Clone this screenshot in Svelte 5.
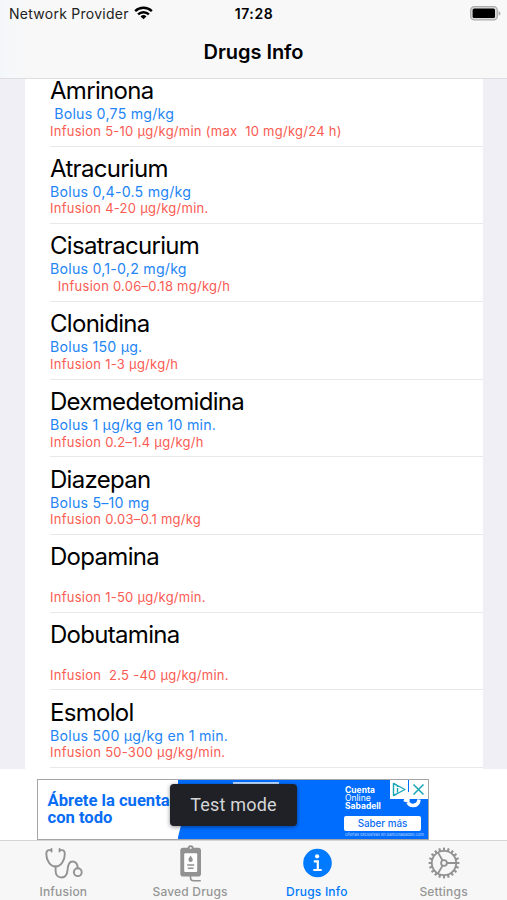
<script>
  const drugs = [
    { name: 'Amrinona', bolus: ' Bolus 0,75 mg/kg', infusion: 'Infusion 5-10 µg/kg/min (max  10 mg/kg/24 h)' },
    { name: 'Atracurium', bolus: 'Bolus 0,4-0.5 mg/kg', infusion: 'Infusion 4-20 µg/kg/min.' },
    { name: 'Cisatracurium', bolus: 'Bolus 0,1-0,2 mg/kg', infusion: '  Infusion 0.06–0.18 mg/kg/h' },
    { name: 'Clonidina', bolus: 'Bolus 150 µg.', infusion: 'Infusion 1-3 µg/kg/h' },
    { name: 'Dexmedetomidina', bolus: 'Bolus 1 µg/kg en 10 min.', infusion: 'Infusion 0.2–1.4 µg/kg/h' },
    { name: 'Diazepan', bolus: 'Bolus 5–10 mg', infusion: 'Infusion 0.03–0.1 mg/kg' },
    { name: 'Dopamina', bolus: '', infusion: 'Infusion 1-50 µg/kg/min.' },
    { name: 'Dobutamina', bolus: '', infusion: 'Infusion  2.5 -40 µg/kg/min.' },
    { name: 'Esmolol', bolus: 'Bolus 500 µg/kg en 1 min.', infusion: 'Infusion 50-300 µg/kg/min.' }
  ];
  const teeth = Array.from({ length: 20 }, (_, i) => i * 18);
</script>

<div class="phone">
  <header>
    <div class="status">
      <div class="carrier">
        <span>Network Provider</span>
        <svg width="19" height="14" viewBox="0 0 20 14" fill="none" stroke="#000" stroke-width="2.5">
          <path d="M1.2 5.1a12.6 12.6 0 0 1 17.6 0" />
          <path d="M4.3 8.5a8.1 8.1 0 0 1 11.4 0" />
          <path d="M10 13.6 6.9 10.6a4.5 4.5 0 0 1 6.2 0z" fill="#000" stroke="none" />
        </svg>
      </div>
      <span class="time">17:28</span>
      <svg class="battery" width="31" height="15" viewBox="0 0 31 15">
        <rect x=".7" y=".7" width="26.6" height="13.2" rx="3.6" fill="#ddd" stroke="#adadad" stroke-width="1.3" />
        <rect x="2.6" y="2.6" width="22.4" height="9.4" rx="1.5" />
        <path d="M28.6 5v4.8q1.9-.9 1.9-2.4T28.6 5z" fill="#aaa" />
      </svg>
    </div>
    <h1>Drugs Info</h1>
  </header>

  <main>
    <ul>
      {#each drugs as d}
        <li>
          <div class="name">{d.name}</div>
          <div class="bolus">{d.bolus}</div>
          <div class="infusion">{d.infusion}</div>
        </li>
      {/each}
    </ul>
  </main>

  <section class="ad-area">
    <div class="ad">
      <svg class="shape" width="250" height="59" viewBox="0 0 250 59">
        <path d="M-1 0h251v59H-.5L7 30z" fill="#006dff" />
        <path d="M55 3h46" stroke="#fff" stroke-width="1.5" />
        <path d="M226 19.5q3 1 5.500 1.500M230 22.500q1.500 3 5 3 5.500 0 6-6" fill="none" stroke="#fff" stroke-width="3.500" />
      </svg>
      <div class="claim">Ábrete la cuenta<br />con todo</div>
      <div class="offer">
        <div class="brand"><b>Cuenta</b><span>Online</span><b>Sabadell</b></div>
        <div class="more">Saber más</div>
        <div class="legal">Ofertas exclusivas en bancosabadell.com</div>
      </div>
      <svg class="choices" width="38" height="19" viewBox="0 0 38 19">
        <path d="M0 0h38v19H0z" fill="#fff" />
        <path d="M3.500 3.500v12l3-1.500 8.500-4.500-8.500-4.500z M7.500 8v4.500M7.500 5.900v1" fill="none" stroke="#16a6b8" stroke-width="1.400" stroke-linejoin="round" />
        <path d="M18.500 0v12" stroke="#006dff" stroke-width="1" />
        <path d="m23.500 4.500 10 10m0-10-10 10" stroke="#16a6b8" stroke-width="1.500" />
      </svg>
      <div class="toast">Test mode</div>
    </div>
  </section>

  <nav>
    <div class="tab">
      <svg width="40" height="36" viewBox="-1 0 40 36" fill="none" stroke="#929292" stroke-width="1.900" stroke-linecap="round" stroke-linejoin="round">
        <path d="M7.300 2.100H5.200Q2.300 2.100 2.300 6C2.300 12 6 18.500 11.600 18.500S20.800 12 20.800 6q0-3.900-2.900-3.900h-2.100M7.500 1v2.500M15.600 1v2.500" />
        <path d="M11.600 18.500V23c0 3.800 2.200 6.500 6 6.500 4.300 0 5.600-3 6-7.800.4-5 1.200-8.200 4.800-8.200 3.800 0 5.200 2.700 5.300 6.700" />
        <circle cx="33.800" cy="24.200" r="3.900" />
      </svg>
      <span>Infusion</span>
    </div>
    <div class="tab">
      <svg width="40" height="36" viewBox="0 0 40 36" fill="#929292">
        <rect x="10.300" y="-.2" width="20.700" height="28.700" rx="2.800" />
        <path d="M17.500 1q0-3.800 3.200-3.800t3.200 3.800" />
        <rect x="14.200" y="5.200" width="13" height="18.800" rx="1" fill="#fff" />
        <path d="M20.600 7.500c-1 1.800-2.200 2.900-2.200 4.300a2.200 2.200 0 0 0 4.400 0c0-1.400-1.200-2.500-2.200-4.300z" />
        <path d="M17.200 17h7M17.800 20.200h5.800M20.500 28v1.700q0 3 3 3h7.300" fill="none" stroke="#929292" stroke-width="1.600" />
        <circle cx="20.700" cy="0" r="1" fill="#f6f6f6" />
      </svg>
      <span>Saved Drugs</span>
    </div>
    <div class="tab active">
      <svg width="40" height="36" viewBox="0 0 40 36">
        <circle cx="20.500" cy="15" r="14.300" fill="#007aff" />
        <circle cx="20.100" cy="8.300" r="2.100" fill="#fff" />
        <path d="M16.800 13.300h4v8.500M16.300 22h8.400" fill="none" stroke="#fff" stroke-width="2.200" />
      </svg>
      <span>Drugs Info</span>
    </div>
    <div class="tab">
      <svg width="40" height="36" viewBox="0 0 40 36" fill="none" stroke="#929292" stroke-width="1.800">
        <circle cx="20" cy="15" r="12.200" />
        <circle cx="20" cy="15" r="2.900" />
        <path d="M22.900 15h9.300M18.600 12.500 13.900 4.400M18.600 17.500l-4.700 8.100" />
        {#each teeth as a}
          <path d="M20 2.800V-.4" stroke-width="2.100" transform={`rotate(${a} 20 15)`} />
        {/each}
      </svg>
      <span>Settings</span>
    </div>
  </nav>
</div>

<style>
  .phone {
    width: 507px;
    height: 900px;
    overflow: hidden;
    display: flex;
    flex-direction: column;
    background: #fff;
    color: #000;
    font-family: Inter, 'Liberation Sans', sans-serif;
  }
  header {
    flex: none;
    box-sizing: border-box;
    height: 79px;
    border-bottom: 1px solid #dedee0;
    background: linear-gradient(90deg, #f4f7f9, #f8f8f8 30px);
    z-index: 1;
  }
  .status {
    display: grid;
    grid-template-columns: 1fr auto 1fr;
    align-items: center;
    height: 27px;
    padding: 0 6px 0 9px;
  }
  .carrier {
    display: flex;
    align-items: center;
    gap: 5px;
    font-size: 14px;
    line-height: 27px;
    letter-spacing: 0.26px;
    white-space: nowrap;
    color: #222;
  }
  .carrier svg { margin-top: -2px; }
  .time {
    font-size: 14px;
    font-weight: 600;
    letter-spacing: 0.6px;
    margin-left: -2px;
  }
  .battery { justify-self: end; }
  h1 {
    margin: 0;
    height: 51px;
    line-height: 51px;
    text-align: center;
    font-size: 20px;
    font-weight: 600;
    letter-spacing: -0.05px;
  }
  main {
    flex: none;
    height: 690px;
    overflow: hidden;
    padding: 0 24px 0 25px;
    background: #f0eff5;
  }
  ul {
    list-style: none;
    margin: -10.2px 0 0;
    padding: 0 0 4px 25px;
    background: #fff;
  }
  li {
    box-sizing: border-box;
    height: 77.7px;
    padding-top: 6.3px;
    border-bottom: 1.4px solid #e8e8ea;
  }
  .name {
    height: 31px;
    line-height: 31px;
    font-size: 24px;
    letter-spacing: -0.7px;
  }
  .bolus {
    height: 16.7px;
    line-height: 16px;
    font-size: 14.2px;
    letter-spacing: 0.22px;
    color: #2385f5;
    white-space: pre;
  }
  .infusion {
    height: 16px;
    line-height: 16px;
    font-size: 13px;
    letter-spacing: 0.26px;
    color: #fa5b52;
    white-space: pre;
  }
  .ad-area {
    flex: none;
    height: 71px;
    box-sizing: border-box;
    padding: 10px 0 0 37px;
  }
  .ad {
    position: relative;
    box-sizing: border-box;
    width: 392px;
    height: 61px;
    border: 1px solid #a5a5a8;
    display: flex;
    justify-content: space-between;
    overflow: hidden;
  }
  .shape { position: absolute; right: 0; top: 0; }
  .claim {
    padding: 12px 0 0 9.5px;
    font: 700 16.6px/17px Roboto, sans-serif;
    color: #086cf5;
    white-space: nowrap;
  }
  .offer {
    position: relative;
    width: 83px;
    color: #fff;
    white-space: nowrap;
  }
  .brand {
    display: flex;
    flex-direction: column;
    padding-top: 6px;
    font: 8.5px/8px Inter, sans-serif;
  }
  .more {
    width: 77px;
    height: 15px;
    margin: 6px 0 0 -1px;
    border-radius: 2px;
    background: #fff;
    color: #086cf5;
    text-align: center;
    font: 500 9.8px/15px Inter, sans-serif;
  }
  .legal {
    font: 4px/6px Inter, sans-serif;
    margin-top: 1px;
    opacity: 0.7;
  }
  .choices { position: absolute; right: 0; top: 0; }
  .toast {
    position: absolute;
    left: 132px;
    top: 4px;
    width: 127px;
    height: 42px;
    border-radius: 4px;
    background: #1f2126;
    box-shadow: 0 1px 4px rgba(0, 0, 0, 0.45);
    color: #d5d6d8;
    text-align: center;
    font: 18px/42px Roboto, sans-serif;
    letter-spacing: 0.2px;
  }
  nav {
    flex: none;
    box-sizing: border-box;
    height: 60px;
    display: grid;
    grid-template-columns: repeat(4, 1fr);
    border-top: 1px solid #d5d5d6;
    background: #f7f7f7;
  }
  .tab {
    display: flex;
    flex-direction: column;
    align-items: center;
    padding-top: 7px;
    font-size: 12px;
    font-weight: 500;
    letter-spacing: 0.2px;
    line-height: 15px;
    color: #969696;
  }
  .tab svg { overflow: visible; }
  .active { color: #007aff; }
</style>
